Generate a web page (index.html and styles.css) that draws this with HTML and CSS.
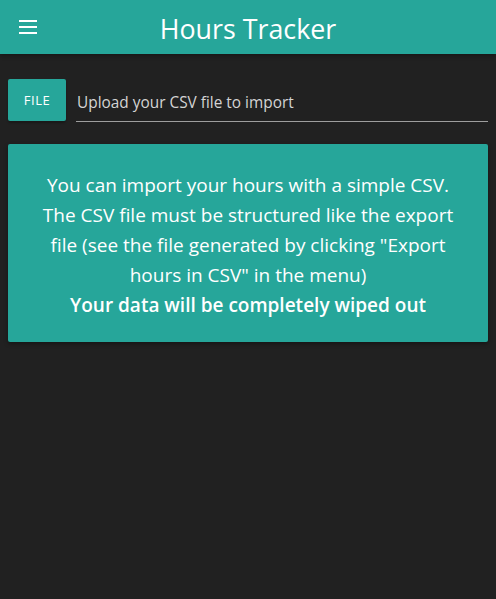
FILE: index.html
```html
<!DOCTYPE html>
<html>
<head>
<meta charset="utf-8">
<link rel="stylesheet" href="styles.css">
</head>
<body>
<header class="topbar">
  <span class="menu"><svg width="18" height="14" viewBox="0 0 18 14"><rect x="0" y="0" width="18" height="2" fill="#fff"/><rect x="0" y="6" width="18" height="2" fill="#fff"/><rect x="0" y="12" width="18" height="2" fill="#fff"/></svg></span>
  <h1 class="title">Hours Tracker</h1>
</header>
<main class="content">
  <div class="file-row">
    <div class="file-btn">FILE</div>
    <div class="file-path">Upload your CSV file to import</div>
  </div>
  <div class="card">
    <p>You can import your hours with a simple CSV.<br>The CSV file must be structured like the export file (see the file generated by clicking "Export hours in CSV" in the menu)</p>
    <p class="bold">Your data will be completely wiped out</p>
  </div>
</main>
</body>
</html>
```
FILE: styles.css
```css
html, body { margin: 0; padding: 0; }
body {
  background: #212121;
  font-family: "Open Sans", "Noto Sans", sans-serif;
  color: #fff;
  width: 496px;
  height: 599px;
}
.topbar {
  height: 54px;
  background: #26a69a;
  position: relative;
  display: flex;
  align-items: center;
  justify-content: center;
  box-shadow: 0 2px 4px rgba(0,0,0,0.3);
}
.menu {
  position: absolute;
  left: 19px;
  top: 20px;
  display: block;
  line-height: 0;
}
.title {
  margin: 0;
  font-weight: 400;
  font-size: 26.8px;
  color: #fff;
  padding-top: 2px;
}
.content { padding: 25px 8px 0 8px; }
.file-row { display: flex; align-items: flex-end; gap: 10px; }
.file-btn {
  width: 58px;
  height: 42px;
  background: #26a69a;
  border-radius: 2px;
  display: flex;
  align-items: center;
  justify-content: center;
  font-size: 13px;
  letter-spacing: 0.5px;
  box-shadow: 0 2px 2px rgba(0,0,0,0.25);
}
.file-path {
  flex: 1;
  border-bottom: 1px solid #9e9e9e;
  color: #d4d4d4;
  font-size: 15.4px;
  padding: 0 0 8px 1px;
  margin-bottom: -1px;
}
.card {
  margin-top: 23px;
  background: #26a69a;
  border-radius: 2px;
  padding: 26px 30px 22px;
  text-align: center;
  font-size: 19px;
  line-height: 30px;
  box-shadow: 0 2px 4px rgba(0,0,0,0.35);
}
.card p { margin: 0; }
.card .bold { font-weight: 600; }
```
